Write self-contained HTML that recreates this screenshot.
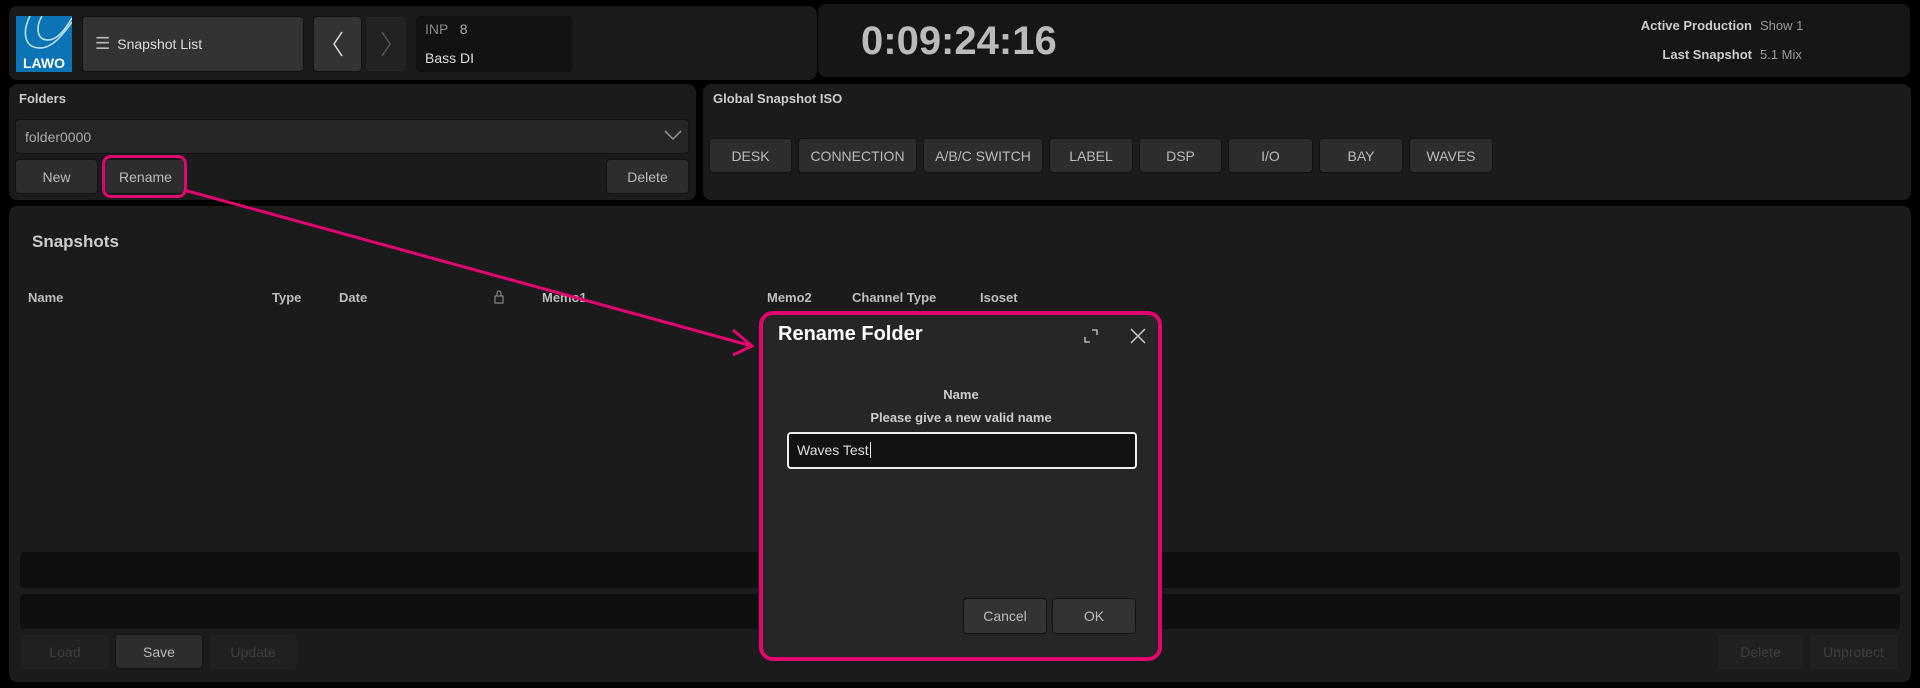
<!DOCTYPE html>
<html><head><meta charset="utf-8"><style>
*{box-sizing:border-box;margin:0;padding:0}
body{width:1920px;height:688px;background:#000;font-family:"Liberation Sans",sans-serif;position:relative;overflow:hidden;color:#ccc}
.a{position:absolute}
.p{position:absolute;background:#1b1b1b;border-radius:8px}
.b{position:absolute;background:#2d2d2d;border:1px solid #121212;border-radius:4px;color:#bbb;font-size:14px;display:flex;align-items:center;justify-content:center}
.d{position:absolute;background:#202020;border-radius:4px;color:#3e3e3e;font-size:14px;display:flex;align-items:center;justify-content:center}
.h{position:absolute;top:290px;font-size:13px;font-weight:bold;color:#bdbdbd}
</style></head><body>
<div class="p" style="left:9px;top:6px;width:808px;height:74px;background:#1a1a1a"></div>
<div class="p" style="left:818px;top:4px;width:1092px;height:73px;background:#161616"></div>
<div class="a" style="left:16px;top:16px;width:56px;height:56px;background:#0a74b5">
<svg width="56" height="40" viewBox="0 0 56 40"><path d="M14 0 C6 16 8 32 24 32 C36 32 46 20 56 6" stroke="#cfe6f4" stroke-width="1.5" fill="none"/><path d="M26 0 C20 10 20 24 32 24 C42 24 50 12 56 2" stroke="#cfe6f4" stroke-width="1.5" fill="none"/></svg>
<div class="a" style="left:0;top:39px;width:56px;text-align:center;color:#fff;font-weight:bold;font-size:14px">LAWO</div></div>
<div class="b" style="left:82px;top:16px;width:222px;height:56px;background:#333;justify-content:flex-start;padding-left:12px;color:#ddd;font-size:14px"><span style="font-size:17px;margin-right:7px;color:#bbb">☰</span>Snapshot List</div>
<div class="b" style="left:313px;top:16px;width:49px;height:56px;background:#333"><svg width="14" height="28"><path d="M11 2 L3 14 L11 26" stroke="#ddd" stroke-width="1.5" fill="none"/></svg></div>
<div class="b" style="left:365px;top:16px;width:42px;height:56px;background:#222;border-color:#1a1a1a"><svg width="14" height="28"><path d="M3 2 L11 14 L3 26" stroke="#555" stroke-width="1.5" fill="none"/></svg></div>
<div class="a" style="left:416px;top:16px;width:156px;height:56px;background:#121212;border-radius:4px"></div>
<div class="a" style="left:425px;top:21px;font-size:14px;color:#888">INP &nbsp;&nbsp;<span style="color:#aaa">8</span></div>
<div class="a" style="left:425px;top:50px;font-size:14px;color:#ddd">Bass DI</div>
<div class="a" style="left:861px;top:19px;font-size:40px;font-weight:bold;color:#bbb">0:09:24:16</div>
<div class="a" style="left:1500px;top:18px;width:252px;text-align:right;font-size:13px;font-weight:bold;color:#ccc">Active Production</div>
<div class="a" style="left:1760px;top:18px;font-size:13px;color:#999">Show 1</div>
<div class="a" style="left:1500px;top:47px;width:252px;text-align:right;font-size:13px;font-weight:bold;color:#ccc">Last Snapshot</div>
<div class="a" style="left:1760px;top:47px;font-size:13px;color:#999">5.1 Mix</div>

<div class="p" style="left:9px;top:84px;width:687px;height:116px"></div>
<div class="p" style="left:703px;top:84px;width:1208px;height:116px"></div>
<div class="a" style="left:19px;top:91px;font-size:13px;font-weight:bold;color:#ccc">Folders</div>
<div class="a" style="left:713px;top:91px;font-size:13px;font-weight:bold;color:#ccc">Global Snapshot ISO</div>
<div class="b" style="left:15px;top:119px;width:674px;height:35px;background:#262626;justify-content:flex-start;padding-left:9px;color:#aaa">folder0000</div>
<svg class="a" style="left:664px;top:129px" width="18" height="12"><path d="M1 2 L9 10 L17 2" stroke="#999" stroke-width="1.5" fill="none"/></svg>
<div class="b" style="left:15px;top:159px;width:83px;height:35px">New</div>
<div class="b" style="left:104px;top:159px;width:83px;height:35px">Rename</div>
<div class="b" style="left:606px;top:159px;width:83px;height:35px">Delete</div>
<div class="b" style="left:709px;top:138px;width:83px;height:35px">DESK</div>
<div class="b" style="left:798px;top:138px;width:119px;height:35px">CONNECTION</div>
<div class="b" style="left:923px;top:138px;width:120px;height:35px">A/B/C SWITCH</div>
<div class="b" style="left:1049px;top:138px;width:84px;height:35px">LABEL</div>
<div class="b" style="left:1139px;top:138px;width:83px;height:35px">DSP</div>
<div class="b" style="left:1228px;top:138px;width:85px;height:35px">I/O</div>
<div class="b" style="left:1319px;top:138px;width:84px;height:35px">BAY</div>
<div class="b" style="left:1409px;top:138px;width:84px;height:35px">WAVES</div>

<div class="p" style="left:9px;top:206px;width:1902px;height:476px"></div>
<div class="a" style="left:32px;top:232px;font-size:17px;font-weight:bold;color:#ccc">Snapshots</div>
<div class="h" style="left:28px">Name</div>
<div class="h" style="left:272px">Type</div>
<div class="h" style="left:339px">Date</div>
<svg class="a" style="left:494px;top:290px" width="10" height="14"><rect x="1" y="6" width="8" height="7" fill="none" stroke="#999"/><path d="M3 6 V3 a2 2 0 0 1 4 0 V6" fill="none" stroke="#999"/></svg>
<div class="h" style="left:542px">Memo1</div>
<div class="h" style="left:767px">Memo2</div>
<div class="h" style="left:852px">Channel Type</div>
<div class="h" style="left:980px">Isoset</div>
<div class="a" style="left:20px;top:552px;width:1880px;height:36px;background:#0f0f0f;border-radius:4px"></div>
<div class="a" style="left:20px;top:594px;width:1880px;height:35px;background:#0f0f0f;border-radius:4px"></div>
<div class="d" style="left:21px;top:635px;width:88px;height:34px">Load</div>
<div class="b" style="left:115px;top:634px;width:88px;height:35px">Save</div>
<div class="d" style="left:209px;top:635px;width:88px;height:34px">Update</div>
<div class="d" style="left:1718px;top:635px;width:85px;height:34px">Delete</div>
<div class="d" style="left:1809px;top:635px;width:89px;height:34px">Unprotect</div>

<div class="a" style="left:102px;top:155px;width:85px;height:43px;border:3px solid #e0066f;border-radius:9px"></div>
<svg class="a" style="left:0;top:0" width="1920" height="688"><path d="M184 190 L752 346" stroke="#e0066f" stroke-width="3"/><path d="M733 330 L752 346 L733 355" stroke="#e0066f" stroke-width="3" fill="none"/></svg>

<div class="a" style="left:759px;top:311px;width:403px;height:350px;background:#262626;border:4px solid #e0066f;border-radius:14px"></div>
<div class="a" style="left:778px;top:323px;font-size:20px;font-weight:bold;color:#fff">Rename Folder</div>
<svg class="a" style="left:1084px;top:329px" width="14" height="14"><path d="M1 8 V13 H6 M8 1 H13 V6" stroke="#ccc" stroke-width="1.3" fill="none"/></svg>
<svg class="a" style="left:1130px;top:328px" width="16" height="16"><path d="M1 1 L15 15 M15 1 L1 15" stroke="#ccc" stroke-width="1.5"/></svg>
<div class="a" style="left:761px;top:387px;width:400px;text-align:center;font-size:13px;font-weight:bold;color:#ccc">Name</div>
<div class="a" style="left:761px;top:410px;width:400px;text-align:center;font-size:13px;font-weight:bold;color:#ccc">Please give a new valid name</div>
<div class="a" style="left:787px;top:432px;width:350px;height:37px;background:#121212;border:2px solid #eee;border-radius:4px;padding:8px 0 0 8px;font-size:14px;color:#ddd">Waves Test<span style="border-left:1px solid #eee;margin-left:1px"></span></div>
<div class="b" style="left:963px;top:598px;width:84px;height:36px;background:#333">Cancel</div>
<div class="b" style="left:1052px;top:598px;width:84px;height:36px;background:#333">OK</div>
</body></html>
